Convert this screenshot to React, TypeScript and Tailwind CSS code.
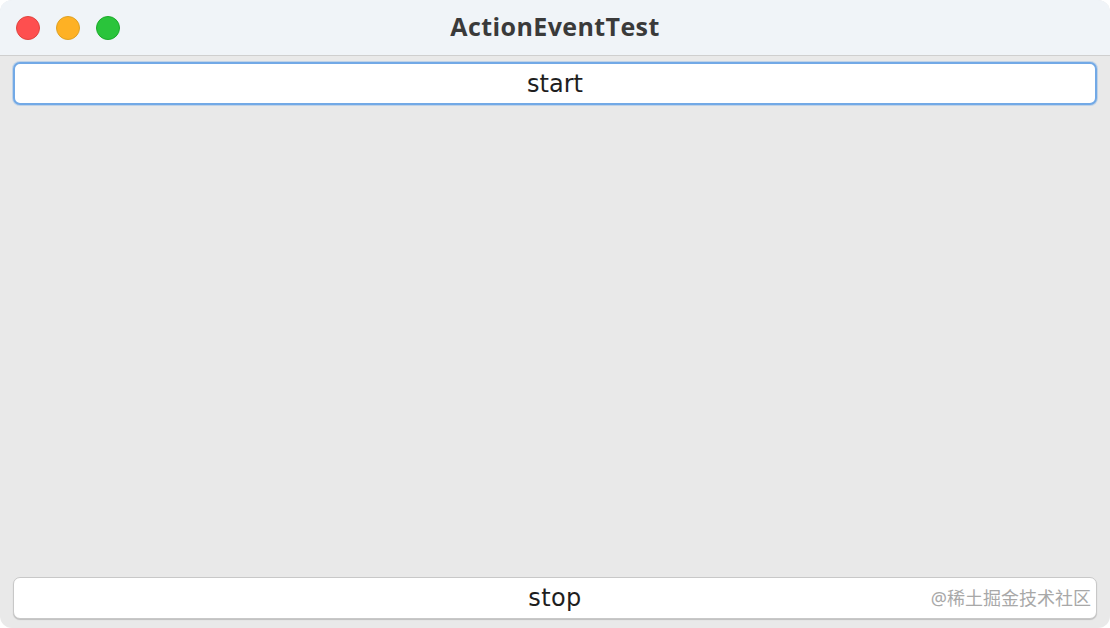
export default function App() {
  return (
    <div className="w-[1110px] h-[628px] bg-white overflow-hidden">
      <div className="w-full h-full rounded-[12px] bg-[#e9e9e9] flex flex-col overflow-hidden">
        <div className="h-[56px] bg-[#f0f4f8] border-b border-[#cfcfcf] flex items-center relative shrink-0">
          <div className="flex items-center gap-[16px] pl-[16px]">
            <div className="w-[24px] h-[24px] rounded-full bg-[#fe4f4f] border border-[#e0443e]" />
            <div className="w-[24px] h-[24px] rounded-full bg-[#feb124] border border-[#dea123]" />
            <div className="w-[24px] h-[24px] rounded-full bg-[#2ac43b] border border-[#1aab29]" />
          </div>
          <div className="absolute inset-0 flex items-center justify-center pointer-events-none">
            <span className="text-[25px] font-bold text-[#3a3a3a] tracking-[0.4px] -mt-[2px]" style={{ fontFamily: '"Open Sans", "Noto Sans", sans-serif' }}>ActionEventTest</span>
          </div>
        </div>
        <div className="flex-1 flex flex-col justify-between px-[13px] pt-[6px] pb-[9px]">
          <button className="h-[43px] w-full rounded-[7px] bg-white border-2 border-[#72a9e6] shadow-[0_0_0_1px_rgba(114,169,230,0.35)] flex items-center justify-center text-[24px] text-[#1e1e1e]" style={{ fontFamily: '"DejaVu Sans", sans-serif' }}>
            start
          </button>
          <div className="relative">
            <button className="h-[42px] w-full rounded-[7px] bg-white border border-[#c8c8c8] shadow-[0_1px_1px_rgba(0,0,0,0.18)] flex items-center justify-center text-[24px] text-[#1e1e1e] tracking-[0.4px]" style={{ fontFamily: '"DejaVu Sans", sans-serif' }}>
              stop
            </button>
            <span className="absolute right-[6px] top-1/2 -translate-y-1/2 text-[18px] text-[#a8a8a8]" style={{ fontFamily: '"Noto Sans", "Noto Sans CJK SC", sans-serif' }}>@稀土掘金技术社区</span>
          </div>
        </div>
      </div>
    </div>
  );
}
